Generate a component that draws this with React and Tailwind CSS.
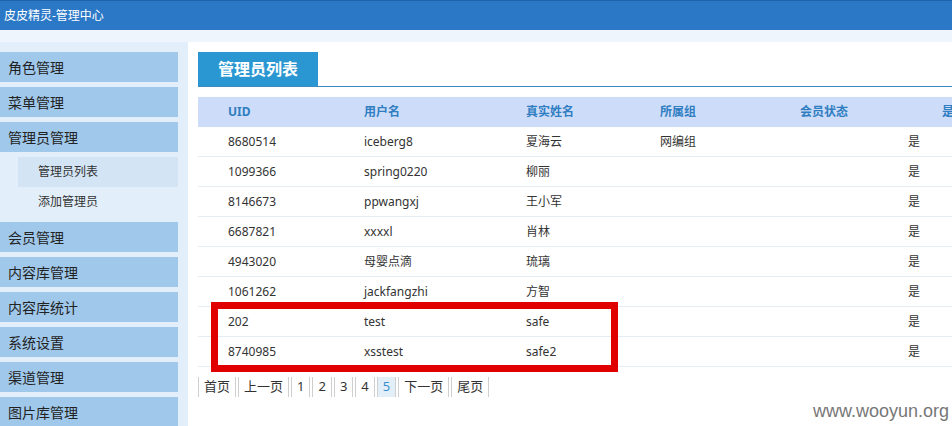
import React from 'react';

const menu = [
  { label: '角色管理' },
  { label: '菜单管理' },
  { label: '管理员管理', children: [
    { label: '管理员列表', active: true },
    { label: '添加管理员' },
  ] },
  { label: '会员管理' },
  { label: '内容库管理' },
  { label: '内容库统计' },
  { label: '系统设置' },
  { label: '渠道管理' },
  { label: '图片库管理' },
];

const rows = [
  ['8680514', 'iceberg8', '夏海云', '网编组'],
  ['1099366', 'spring0220', '柳丽', ''],
  ['8146673', 'ppwangxj', '王小军', ''],
  ['6687821', 'xxxxl', '肖林', ''],
  ['4943020', '母婴点滴', '琉璃', ''],
  ['1061262', 'jackfangzhi', '方智', ''],
  ['202', 'test', 'safe', ''],
  ['8740985', 'xsstest', 'safe2', ''],
];

const pages = ['首页', '上一页', '1', '2', '3', '4', '5', '下一页', '尾页'];

const font = { fontFamily: '"Noto Sans", "Noto Sans CJK SC", sans-serif' };

export default function App() {
  return (
    <div className="relative w-[952px] h-[426px] overflow-hidden bg-white text-[#333]" style={font}>
      {/* Top bar */}
      <div className="h-[30px] bg-[#2a78c6] border-t border-[#1f63a8] flex items-center px-[4px]">
        <span className="text-white text-[12px]">皮皮精灵-管理中心</span>
      </div>
      <div className="h-[12px] bg-[#eef5fc]" />

      <div className="flex">
        {/* Sidebar */}
        <aside className="w-[188px] shrink-0 bg-[#e2eef9] pt-[10px] pr-[10px] flex flex-col gap-[5px] h-[384px]">
          {menu.map((m) => (
            <div key={m.label}>
              <div className="h-[30px] bg-[#9fc8eb] flex items-center pl-[8px] text-[14px] text-[#222]">
                {m.label}
              </div>
              {m.children && (
                <div className="mt-[5px]">
                  {m.children.map((c) => (
                    <div
                      key={c.label}
                      className={`ml-[18px] h-[30px] flex items-center pl-[20px] text-[12px] text-[#333] ${c.active ? 'bg-[#d3e5f5]' : ''}`}
                    >
                      {c.label}
                    </div>
                  ))}
                </div>
              )}
            </div>
          ))}
        </aside>

        {/* Main */}
        <main className="flex-1 pl-[10px] pt-[10px] min-w-0">
          <div className="flex border-b border-[#3d8ac0] h-[35px]">
            <div className="w-[120px] bg-[#2b97d2] text-white text-[16px] font-bold flex items-center justify-center">
              管理员列表
            </div>
          </div>

          <div className="mt-[10px] w-[800px]">
            <div className="h-[30px] bg-[#cddcf8] flex items-center text-[12px] font-bold text-[#2f7ec2]">
              <div className="w-[166px] pl-[30px] shrink-0">UID</div>
              <div className="w-[162px] shrink-0">用户名</div>
              <div className="w-[134px] shrink-0">真实姓名</div>
              <div className="w-[140px] shrink-0">所属组</div>
              <div className="w-[142px] shrink-0">会员状态</div>
              <div className="shrink-0">是否</div>
            </div>
            {rows.map((r) => (
              <div key={r[0]} className="h-[30px] border-b border-[#e3edf5] flex items-center text-[12px] text-[#333]">
                <div className="w-[166px] pl-[30px] shrink-0">{r[0]}</div>
                <div className="w-[162px] shrink-0">{r[1]}</div>
                <div className="w-[134px] shrink-0">{r[2]}</div>
                <div className="w-[140px] shrink-0">{r[3]}</div>
                <div className="w-[142px] shrink-0 pl-[108px]">是</div>
              </div>
            ))}
          </div>

          {/* Pagination */}
          <div className="mt-[10px] flex gap-[2px] h-[20px]">
            {pages.map((p) => (
              <span
                key={p}
                className={`border-x border-[#cfcfcf] px-[5px] flex items-center text-[13px] ${p === '5' ? 'bg-[#e2eff9] text-[#3a8fd0]' : 'text-[#333]'}`}
              >
                {p}
              </span>
            ))}
          </div>
        </main>
      </div>

      {/* annotation box */}
      <div className="absolute left-[211px] top-[302px] w-[407px] h-[70px] border-[7px] border-[#e00000]" />

      {/* watermark */}
      <div
        className="absolute right-[3px] bottom-[1px] text-[18px] text-[#777]"
        style={{ fontFamily: '"Liberation Sans", Arial, sans-serif' }}
      >
        www.wooyun.org
      </div>
    </div>
  );
}
